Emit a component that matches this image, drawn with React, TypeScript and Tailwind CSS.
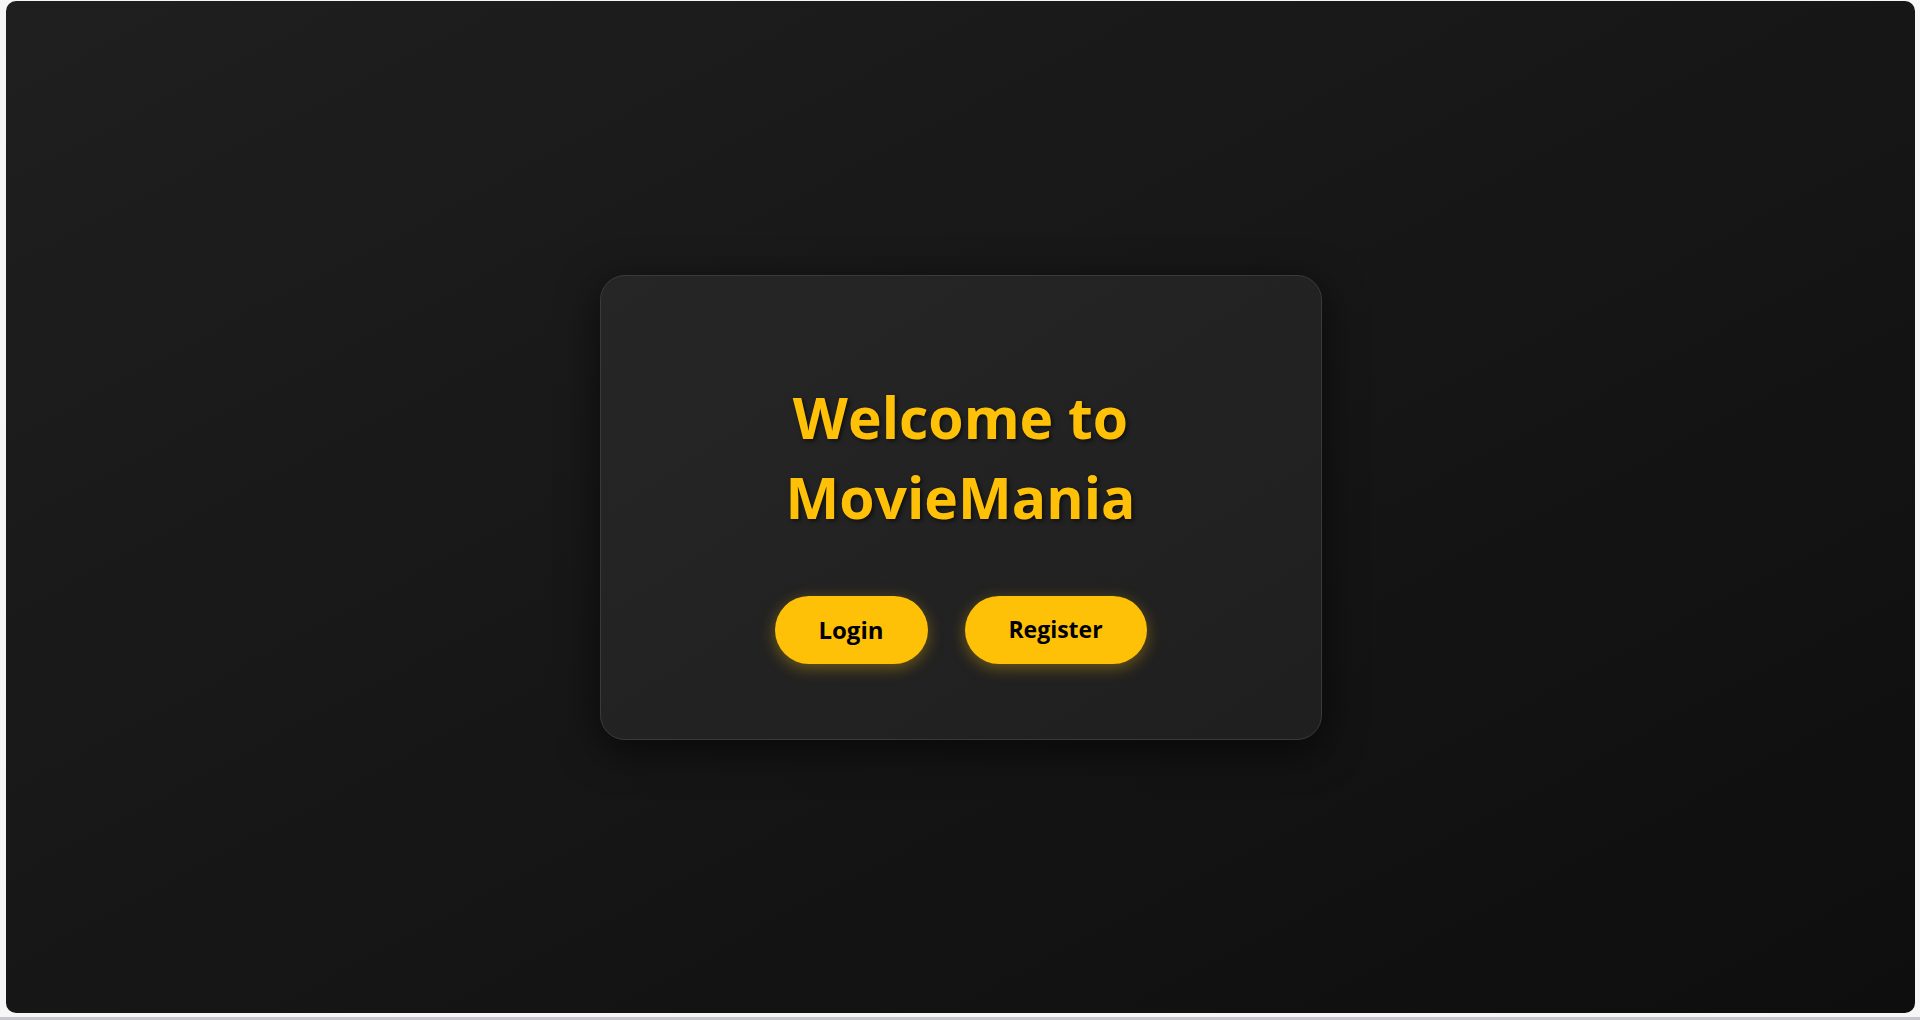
import React from "react";

export default function App() {
  return (
    <div className="w-full h-[1020px] bg-[#f6f6f6] flex flex-col overflow-hidden" style={{ fontFamily: '"Open Sans", "Noto Sans", sans-serif' }}>
      <div className="pt-[1px] pl-[6px] pr-[5px]">
        <div className="h-[1012px] rounded-[10px] bg-linear-to-br from-[#1f1f1f] to-[#0e0e0e] flex items-center justify-center">
          <div className="w-[722px] h-[465px] rounded-[25px] border border-[#3a3a3a] bg-linear-to-br from-[#262626] to-[#1f1f1f] shadow-[0_10px_40px_rgba(0,0,0,0.6)] flex flex-col items-center pt-[101px]">
            <h1 className="text-[57px] leading-[80px] font-bold text-[#ffc107] text-center [text-shadow:2px_2px_4px_rgba(0,0,0,0.6)]">
              Welcome to
              <br />
              MovieMania
            </h1>
            <div className="flex gap-[37px] mt-[59px]">
              <button className="w-[153px] h-[68px] rounded-full bg-[#ffc107] text-black text-[24px] font-bold shadow-[0_4px_15px_rgba(255,193,7,0.35)]">
                Login
              </button>
              <button className="w-[182px] h-[68px] rounded-full bg-[#ffc107] text-black text-[23px] font-bold shadow-[0_4px_15px_rgba(255,193,7,0.35)]">
                Register
              </button>
            </div>
          </div>
        </div>
      </div>
      <div className="flex-1" />
      <div className="h-[3px] bg-[#c6c6cc]" />
    </div>
  );
}
